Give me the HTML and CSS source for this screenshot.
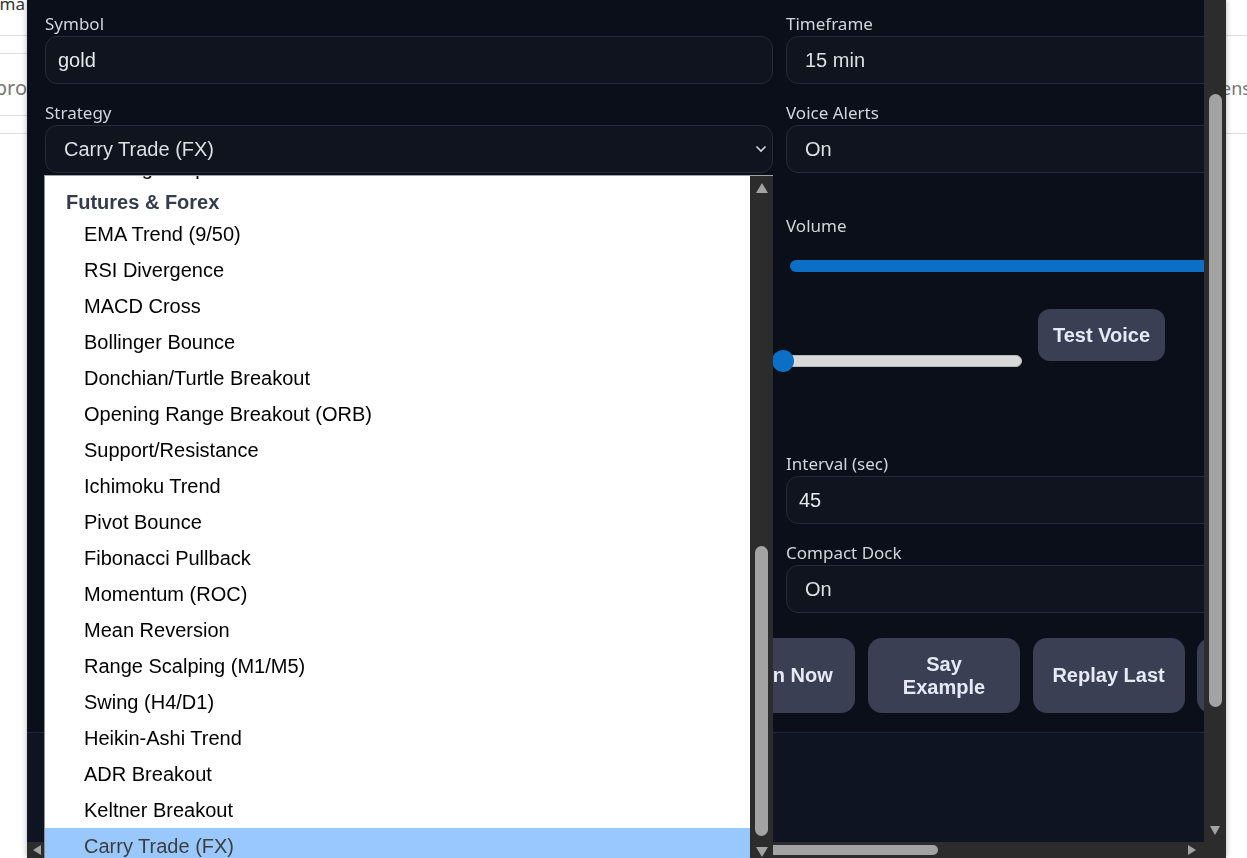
FILE: index.html
```html
<!DOCTYPE html>
<html lang="en">
  <head>
    <meta charset="UTF-8" />
    <meta name="viewport" content="width=device-width, initial-scale=1.0" />
    <title>Signal Voice Settings</title>
    <link rel="stylesheet" href="styles.css">
  </head>
  <body>
    <div class="page">
      <div class="edge edge-left">
        <div class="cell cell-top"><span class="ink-dark">Automa</span></div>
        <div class="cell cell-thin"></div>
        <div class="cell cell-mid"><span class="ink-grey">Approval pro</span></div>
        <div class="cell cell-thin"></div>
      </div>
      <div class="edge edge-right">
        <div class="cell cell-top"></div>
        <div class="cell cell-tall"><span class="ink-grey">ense</span></div>
      </div>
    </div>

    <div class="modal">
      <div class="modal-main">
        <div class="viewport">
          <div class="content">
            <div class="fields">
              <div class="col">
                <div class="field">
                  <label class="label">Symbol</label>
                  <input class="input" type="text" value="gold" />
                </div>
                <div class="field">
                  <label class="label">Strategy</label>
                  <div class="input select">
                    <span>Carry Trade (FX)</span>
                    <svg class="chevron" width="12" height="8" viewBox="0 0 12 8"><path d="M1.5 1.5 L6 6 L10.5 1.5" fill="none" stroke="#d3d7df" stroke-width="1.6"/></svg>
                  </div>
                </div>
                <div class="field field-gap">
                  <label class="label">Voice</label>
                  <div class="input select"><span>Default</span></div>
                </div>
              </div>

              <div class="col">
                <div class="field">
                  <label class="label">Timeframe</label>
                  <div class="input select"><span>15 min</span></div>
                </div>
                <div class="field">
                  <label class="label">Voice Alerts</label>
                  <div class="input select"><span>On</span></div>
                </div>
                <div class="field field-gap">
                  <label class="label">Volume</label>
                  <div class="range range-volume">
                    <div class="track track-full"></div>
                  </div>
                </div>
                <div class="voice-row">
                  <div class="range range-rate">
                    <div class="track track-empty"></div>
                    <span class="thumb"></span>
                  </div>
                  <button class="btn btn-test">Test Voice</button>
                </div>
                <div class="field field-interval">
                  <label class="label">Interval (sec)</label>
                  <input class="input" type="text" value="45" />
                </div>
                <div class="field">
                  <label class="label">Compact Dock</label>
                  <div class="input select"><span>On</span></div>
                </div>
              </div>
            </div>

            <div class="actions">
              <button class="btn">Start</button>
              <button class="btn">Stop</button>
              <button class="btn">Scan</button>
              <button class="btn">Mute</button>
              <button class="btn">Listen Now</button>
              <button class="btn">Say Example</button>
              <button class="btn">Replay Last</button>
              <button class="btn">Clear Log</button>
            </div>
          </div>
          <div class="footer"></div>
        </div>

        <div class="vscroll">
          <div class="vthumb"></div>
          <svg class="arrow-down" width="10" height="9" viewBox="0 0 10 9"><polygon points="0,0 10,0 5,9" fill="#a3a3a3"/></svg>
        </div>
      </div>

      <div class="hscroll">
        <svg width="8" height="10" viewBox="0 0 8 10"><polygon points="8,0 8,10 0,5" fill="#a3a3a3"/></svg>
        <div class="hthumb"></div>
        <svg class="arrow-right" width="8" height="10" viewBox="0 0 8 10"><polygon points="0,0 0,10 8,5" fill="#a3a3a3"/></svg>
      </div>
    </div>

    <div class="popup">
      <div class="popup-list">
        <div class="popup-inner">
          <div class="opt">Earnings Gap</div>
          <div class="opt-group">Futures &amp; Forex</div>
          <div class="opt">EMA Trend (9/50)</div>
          <div class="opt">RSI Divergence</div>
          <div class="opt">MACD Cross</div>
          <div class="opt">Bollinger Bounce</div>
          <div class="opt">Donchian/Turtle Breakout</div>
          <div class="opt">Opening Range Breakout (ORB)</div>
          <div class="opt">Support/Resistance</div>
          <div class="opt">Ichimoku Trend</div>
          <div class="opt">Pivot Bounce</div>
          <div class="opt">Fibonacci Pullback</div>
          <div class="opt">Momentum (ROC)</div>
          <div class="opt">Mean Reversion</div>
          <div class="opt">Range Scalping (M1/M5)</div>
          <div class="opt">Swing (H4/D1)</div>
          <div class="opt">Heikin-Ashi Trend</div>
          <div class="opt">ADR Breakout</div>
          <div class="opt">Keltner Breakout</div>
          <div class="opt selected">Carry Trade (FX)</div>
        </div>
      </div>
      <div class="popup-scroll">
        <svg class="arrow-up" width="12" height="10" viewBox="0 0 12 10"><polygon points="6,0 12,10 0,10" fill="#a3a3a3"/></svg>
        <div class="pthumb"></div>
        <svg class="arrow-down" width="12" height="10" viewBox="0 0 12 10"><polygon points="0,0 12,0 6,10" fill="#a3a3a3"/></svg>
      </div>
    </div>
  </body>
</html>
```

FILE: styles.css
```css
body {
  margin: 0;
  height: 858px;
  overflow: hidden;
  background-color: #fff;
  font-family: "Noto Sans", sans-serif;
}

/* page behind the modal */
.page {
  display: flex;
  justify-content: space-between;
}

.edge {
  display: flex;
  flex-direction: column;
  overflow: hidden;
  font-size: 20px;
  line-height: 28px;
  white-space: nowrap;
}

.edge-left {
  width: 27px;
}

.edge-right {
  width: 21px;
}

.cell {
  display: flex;
  border-bottom: 1px solid #dedede;
  box-sizing: border-box;
}

.edge-left .cell {
  justify-content: flex-end;
}

.cell-top {
  height: 36px;
  align-items: flex-start;
}

.cell-top span {
  margin: -10px 2px 0 0;
  font-size: 17px;
}

.cell-thin {
  height: 18px;
}

.cell-mid {
  height: 62px;
  padding-top: 20px;
}

.cell-tall {
  height: 98px;
  padding-top: 38px;
}

.edge-right .cell-tall span {
  margin-left: -5px;
  font-size: 18px;
}

.ink-dark {
  color: #333;
}

.ink-grey {
  color: #777;
}

/* modal */
.modal {
  position: fixed;
  left: 27px;
  top: 0;
  width: 1199px;
  height: 858px;
  display: flex;
  flex-direction: column;
  background-color: #0b0f19;
  box-shadow: 0 0 6px rgba(0, 0, 0, 0.3);
}

.modal-main {
  display: flex;
  height: 842px;
}

.viewport {
  flex: 1;
  min-width: 0;
  overflow: hidden;
  display: flex;
  flex-direction: column;
}

.content {
  padding: 14px 0 0 18px;
}

.fields {
  display: grid;
  grid-template-columns: 728px 728px;
  column-gap: 13px;
  align-items: start;
}

.col {
  display: flex;
  flex-direction: column;
}

.field {
  display: flex;
  flex-direction: column;
  gap: 2px;
}

.field + .field {
  margin-top: 19px;
}

.field.field-gap {
  margin-top: 43px;
}

.field.field-interval {
  margin-top: 82px;
}

.label {
  font-size: 17px;
  line-height: 20px;
  color: #d0d4dd;
}

.input {
  height: 48px;
  box-sizing: border-box;
  border: 1px solid #262b3b;
  border-radius: 12px;
  background-color: #10141f;
  color: #e4e7ee;
  font-family: "Liberation Sans", Arial, sans-serif;
  font-size: 20px;
  padding: 0 12px;
  outline: none;
}

.select {
  display: flex;
  align-items: center;
  justify-content: space-between;
  padding: 0 5px 0 18px;
  color: #dcdfe6;
}

.chevron {
  display: block;
}

/* sliders */
.range {
  position: relative;
  height: 22px;
  display: flex;
  align-items: center;
}

.range-volume {
  margin: 17px 0 0 4px;
}

.track {
  flex: 1;
  height: 12px;
  border-radius: 6px;
  box-sizing: border-box;
}

.track-full {
  background-color: #0b6fc5;
}

.track-empty {
  background-color: #d9d9d9;
  border: 1px solid #b9b9b9;
}

.thumb {
  position: absolute;
  left: 0;
  top: 0;
  width: 22px;
  height: 22px;
  border-radius: 50%;
  background-color: #0b6fc5;
}

.voice-row {
  display: flex;
  align-items: flex-start;
  gap: 16px;
  margin: 32px 0 0 -14px;
}

.range-rate {
  width: 250px;
  margin-top: 41px;
}

/* buttons */
.btn {
  flex-shrink: 0;
  width: 152px;
  height: 75px;
  padding: 0 16px;
  border: none;
  border-radius: 14px;
  background-color: #3b3f54;
  color: #e6eaf6;
  font-family: "Liberation Sans", Arial, sans-serif;
  font-size: 20px;
  font-weight: bold;
  line-height: 23px;
}

.btn-test {
  width: 127px;
  height: 52px;
  padding: 0;
  border-radius: 12px;
}

.actions {
  display: flex;
  gap: 12.6px;
  margin-top: 25px;
}

.footer {
  flex: 1;
  margin-top: 19px;
  border-top: 1px solid #232839;
  background-color: #0f1423;
}

/* modal scrollbars */
.vscroll {
  width: 22px;
  display: flex;
  flex-direction: column;
  align-items: center;
  padding-top: 94px;
  box-sizing: border-box;
  background-color: #2c2c2c;
}

.vthumb {
  width: 13px;
  height: 613px;
  border-radius: 7px;
  background-color: #a3a3a3;
}

.vscroll .arrow-down {
  margin: auto 0 7px;
}

.hscroll {
  height: 16px;
  display: flex;
  align-items: center;
  padding-left: 6px;
  background-color: #2c2c2c;
}

.hthumb {
  width: 378px;
  height: 10px;
  margin-left: 519px;
  border-radius: 5px;
  background-color: #a3a3a3;
}

.arrow-right {
  margin: 0 30px 0 auto;
}

/* open dropdown list */
.popup {
  position: fixed;
  left: 44px;
  top: 175px;
  width: 729px;
  height: 683px;
  display: flex;
  box-sizing: border-box;
  border-top: 1px solid #a3a3a3;
  border-left: 1px solid #8e8e8e;
  background-color: #fff;
  z-index: 2;
}

.popup-list {
  flex: 1;
  overflow: hidden;
  font-family: "Liberation Sans", Arial, sans-serif;
  font-size: 20px;
  color: #000;
}

.popup-inner {
  margin-top: -26px;
}

.opt {
  height: 36px;
  line-height: 36px;
  padding-left: 39px;
  white-space: nowrap;
}

.opt-group {
  height: 30px;
  line-height: 32px;
  padding-left: 21px;
  font-weight: bold;
  color: #333c4d;
}

.opt.selected {
  background-color: #99c8ff;
  color: #3d3d3d;
}

.popup-scroll {
  width: 23px;
  display: flex;
  flex-direction: column;
  align-items: center;
  background-color: #2c2c2c;
}

.popup-scroll .arrow-up {
  margin-top: 7px;
}

.pthumb {
  width: 13px;
  height: 290px;
  margin-top: 353px;
  border-radius: 7px;
  background-color: #a3a3a3;
}

.popup-scroll .arrow-down {
  margin-top: 11px;
}
```
